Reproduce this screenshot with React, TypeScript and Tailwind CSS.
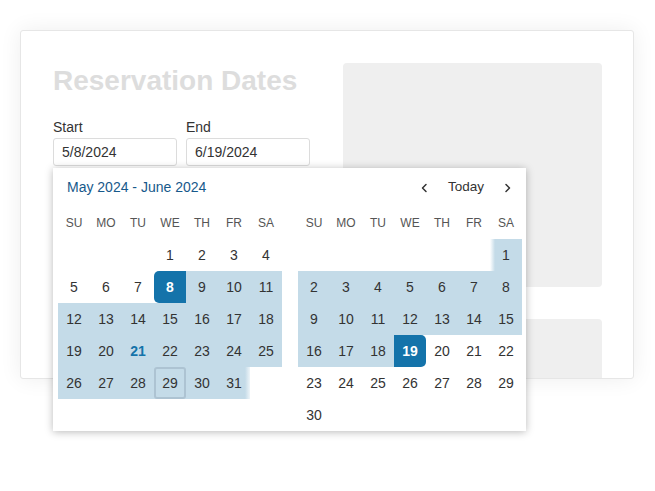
import React from "react";

type Cell = number | null;

// build calendar weeks for a month starting on given weekday
function buildWeeks(startDow: number, days: number): Cell[][] {
  const cells: Cell[] = [];
  for (let i = 0; i < startDow; i++) cells.push(null);
  for (let d = 1; d <= days; d++) cells.push(d);
  while (cells.length % 7) cells.push(null);
  const weeks: Cell[][] = [];
  for (let i = 0; i < cells.length; i += 7) weeks.push(cells.slice(i, i + 7));
  return weeks;
}

const months = [
  { m: 5, weeks: buildWeeks(3, 31) },
  { m: 6, weeks: buildWeeks(6, 30) },
];

const dayNames = ["SU", "MO", "TU", "WE", "TH", "FR", "SA"];

const START = 508;
const END = 619;

function DayCell({ month, day }: { month: number; day: Cell }) {
  if (day === null) return <div className="h-8" />;
  const v = month * 100 + day;
  const isStart = v === START;
  const isEnd = v === END;
  const inRange = v > START && v < END;

  let cls = "h-8 flex items-center justify-center text-[14px] text-[#333]";
  if (isStart) cls += " bg-[#1473aa] text-white font-bold rounded-l-[5px]";
  else if (isEnd) cls += " bg-[#1473aa] text-white font-bold rounded-r-[5px]";
  else if (v === 531) cls += " bg-[linear-gradient(to_right,#c4dbe8_27px,transparent_34px)]";
  else if (v === 601) cls += " bg-[linear-gradient(to_right,transparent,#c4dbe8_5px)]";
  else if (inRange) cls += " bg-[#c4dbe8]";

  if (v === 521) cls += " !text-[#1473aa] font-bold";

  return (
    <div className={cls}>
      {v === 529 ? (
        <span className="h-8 w-8 flex items-center justify-center rounded-[3px] border-2 border-[#adc3d2]">
          {day}
        </span>
      ) : (
        day
      )}
    </div>
  );
}

function MonthGrid({ m, weeks }: { m: number; weeks: Cell[][] }) {
  return (
    <div className="w-[224px]">
      <div className="grid grid-cols-7">
        {dayNames.map((d) => (
          <div key={d} className="h-8 flex items-center justify-center text-[12px] text-[#555]">
            {d}
          </div>
        ))}
      </div>
      <div className="grid grid-cols-7">
        {weeks.flat().map((day, i) => (
          <DayCell key={i} month={m} day={day} />
        ))}
      </div>
    </div>
  );
}

function Chevron({ dir }: { dir: "left" | "right" }) {
  return (
    <svg width="8" height="10" viewBox="0 0 8 10" fill="none">
      <path
        d={dir === "left" ? "M6 1.5 L2.5 5 L6 8.5" : "M2 1.5 L5.5 5 L2 8.5"}
        stroke="#333"
        strokeWidth="1.5"
        strokeLinecap="round"
        strokeLinejoin="round"
      />
    </svg>
  );
}

function DatePopup() {
  return (
    <div className="absolute left-0 top-[calc(100%+2px)] z-10 w-[473px] bg-white shadow-[0_1px_8px_rgba(0,0,0,0.28)]">
      <div className="h-[39px] px-[14px] flex items-center justify-between">
        <span className="text-[14px] text-[#17598b]">May 2024 - June 2024</span>
        <div className="flex items-center gap-[20px] text-[13.5px] text-[#333]">
          <Chevron dir="left" />
          <span>Today</span>
          <Chevron dir="right" />
        </div>
      </div>
      <div className="flex gap-4 pl-[5px] pr-[4px]">
        {months.map((mo) => (
          <MonthGrid key={mo.m} m={mo.m} weeks={mo.weeks} />
        ))}
      </div>
    </div>
  );
}

function Field({ label, value }: { label: string; value: string }) {
  return (
    <div className="flex flex-col w-[124px]">
      <label className="text-[14px] leading-5 text-[#333] mb-[1px]">{label}</label>
      <div className="h-[28px] flex items-center px-[8px] border border-[#dcdcdc] rounded-[3px] text-[14px] text-[#333]">
        {value}
      </div>
    </div>
  );
}

export default function App() {
  return (
    <div className="w-[655px] h-[491px] bg-white pt-[30px] pl-[20px] font-['Liberation_Sans',Arial,sans-serif]">
      <div className="w-[614px] flex gap-[33px] pl-[32px] pt-[32px] pr-[31px] bg-white border border-[#e6e6e6] rounded-[3px] shadow-[0_0_22px_rgba(0,0,0,0.07)]">
        <div className="w-[257px] pt-[2px] flex flex-col">
          <h1 className="text-[28px] leading-[32px] font-bold text-[#dddddd]">Reservation Dates</h1>
          <div className="relative mt-[20px] flex gap-[9px]">
            <Field label="Start" value="5/8/2024" />
            <Field label="End" value="6/19/2024" />
            <DatePopup />
          </div>
        </div>
        <div className="flex-1 flex flex-col gap-[32px]">
          <div className="h-[224px] bg-[#efefef] rounded-[4px]" />
          <div className="h-[59px] bg-[#efefef] rounded-t-[4px]" />
        </div>
      </div>
    </div>
  );
}
